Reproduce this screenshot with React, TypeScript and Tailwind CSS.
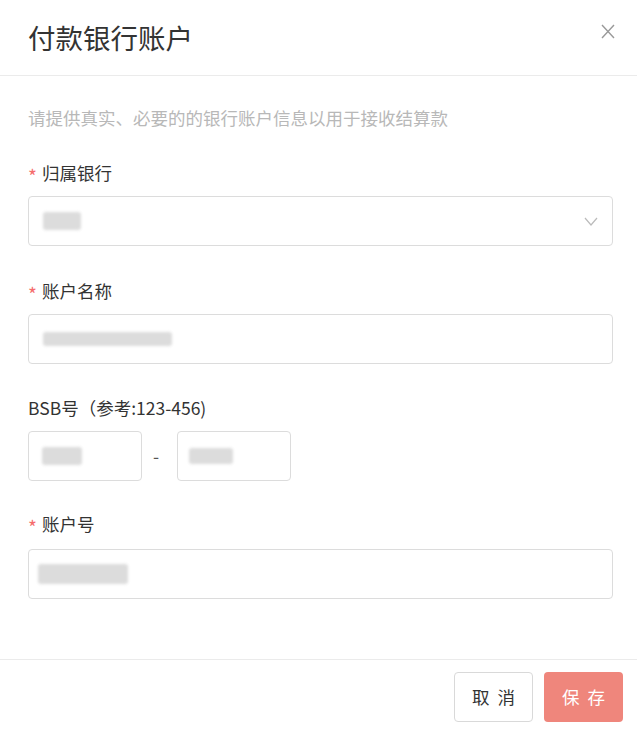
import { useState } from "react";

const font = { fontFamily: '"Noto Sans CJK SC", "Noto Sans", sans-serif' };

function Label({ text, required }: { text: string; required?: boolean }) {
  return (
    <div className="flex items-center h-[24px] text-[17.5px] leading-[24px] text-[#333]">
      {required && <span className="text-[#f56c6c] text-[19px] w-[14px] leading-none pt-[4px]">*</span>}
      <span>{text}</span>
    </div>
  );
}

// blurred, pixelated value as seen in the screenshot
function Smudge({ className }: { className: string }) {
  return <div className={`bg-[#dcdcdc] blur-[1.5px] rounded-[3px] ${className}`} />;
}

export default function App() {
  const [open] = useState(true);
  if (!open) return null;

  return (
    <div style={font} className="w-[637px] h-[731px] bg-white flex flex-col">
      <div className="h-[76px] shrink-0 flex items-start justify-between pl-[28px] pr-[21px] border-b border-[#ebebeb]">
        <h1 className="mt-[20px] text-[27.5px] text-[#333] font-normal leading-[34px]">付款银行账户</h1>
        <button type="button" className="mt-[23px] w-[16px] h-[16px] flex items-center justify-center">
          <svg width="14" height="15" viewBox="0 0 14 15" fill="none" stroke="#999" strokeWidth="1.4">
            <path d="M1 1 L13 14 M13 1 L1 14" />
          </svg>
        </button>
      </div>

      <div className="flex-1 pl-[28px] pr-[24px] pt-[30px] flex flex-col">
        <p className="text-[17.5px] leading-[24px] text-[#b8b8b8]">
          请提供真实、必要的的银行账户信息以用于接收结算款
        </p>

        <div className="mt-[31px] flex flex-col gap-[11px]">
          <Label text="归属银行" required />
          <div className="h-[50px] border border-[#dcdcdc] rounded-[4px] flex items-center justify-between pl-[14px] pr-[14px]">
            <Smudge className="w-[38px] h-[18px]" />
            <svg width="14" height="9" viewBox="0 0 14 9" fill="none" stroke="#bbb" strokeWidth="1.2">
              <path d="M1 1 L7 8 L13 1" />
            </svg>
          </div>
        </div>

        <div className="mt-[33px] flex flex-col gap-[11px]">
          <Label text="账户名称" required />
          <div className="h-[50px] border border-[#dcdcdc] rounded-[4px] flex items-center pl-[14px]">
            <Smudge className="w-[129px] h-[14px]" />
          </div>
        </div>

        <div className="mt-[32px] flex flex-col gap-[11px]">
          <Label text="BSB号（参考:123-456)" />
          <div className="flex items-center">
            <div className="w-[114px] h-[50px] border border-[#dcdcdc] rounded-[4px] flex items-center pl-[13px]">
              <Smudge className="w-[40px] h-[18px]" />
            </div>
            <span className="w-[35px] pr-[7px] text-center text-[17.5px] text-[#555]">-</span>
            <div className="w-[114px] h-[50px] border border-[#dcdcdc] rounded-[4px] flex items-center pl-[11px]">
              <Smudge className="w-[44px] h-[16px]" />
            </div>
          </div>
        </div>

        <div className="mt-[31px] flex flex-col gap-[13px]">
          <Label text="账户号" required />
          <div className="h-[50px] border border-[#dcdcdc] rounded-[4px] flex items-center pl-[9px]">
            <Smudge className="w-[90px] h-[20px]" />
          </div>
        </div>
      </div>

      <div className="h-[72px] shrink-0 border-t border-[#ebebeb] flex justify-end gap-[11px] pt-[12px] pr-[14px]">
        <button
          type="button"
          className="w-[79px] h-[50px] border border-[#d9d9d9] rounded-[4px] bg-white text-[#333] text-[17.5px] flex items-center justify-center gap-[8px]"
        >
          <span>取</span>
          <span>消</span>
        </button>
        <button
          type="button"
          className="w-[79px] h-[50px] rounded-[4px] bg-[#ef867c] text-white text-[17.5px] flex items-center justify-center gap-[8px]"
        >
          <span>保</span>
          <span>存</span>
        </button>
      </div>
    </div>
  );
}
